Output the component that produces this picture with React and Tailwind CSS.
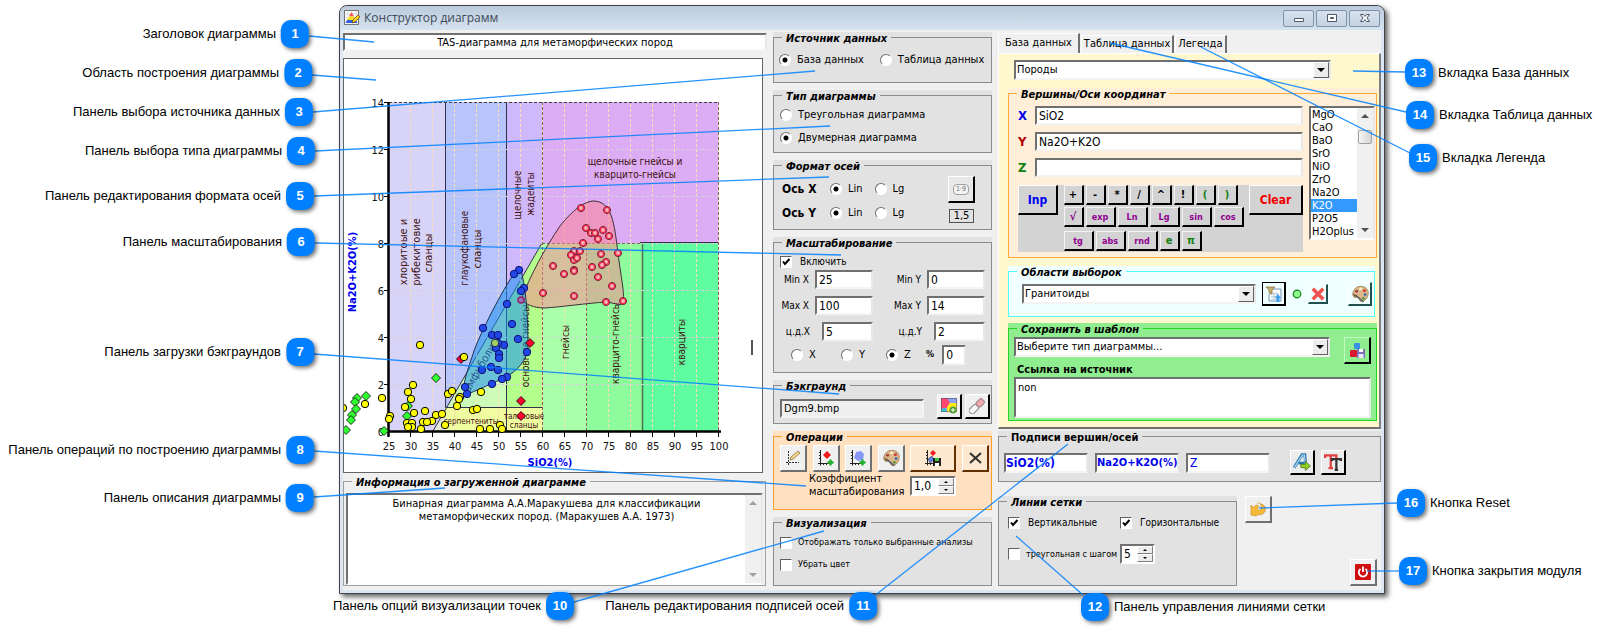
import { useState } from 'react'
import { clsx } from 'clsx'

const callouts = [
  { n: 1, x: 295, y: 34, side: 'left', text: 'Заголовок диаграммы', line: [309, 36, 374, 42] },
  { n: 2, x: 298, y: 73, side: 'left', text: 'Область построения диаграммы', line: [312, 75, 376, 80] },
  { n: 3, x: 299, y: 112, side: 'left', text: 'Панель выбора источника данных', line: [313, 112, 815, 71] },
  { n: 4, x: 301, y: 151, side: 'left', text: 'Панель выбора типа диаграммы', line: [315, 151, 830, 126] },
  { n: 5, x: 300, y: 196, side: 'left', text: 'Панель редактирования формата осей', line: [314, 196, 829, 177] },
  { n: 6, x: 301, y: 242, side: 'left', text: 'Панель масштабирования', line: [315, 243, 841, 255] },
  { n: 7, x: 300, y: 352, side: 'left', text: 'Панель загрузки бэкграундов', line: [314, 354, 839, 394] },
  { n: 8, x: 300, y: 450, side: 'left', text: 'Панель операций по построению диаграммы', line: [314, 451, 806, 486] },
  { n: 9, x: 300, y: 498, side: 'left', text: 'Панель описания диаграммы', line: [314, 497, 445, 488] },
  { n: 10, x: 560, y: 606, side: 'left', text: 'Панель опций визуализации точек', line: [574, 602, 824, 531] },
  { n: 11, x: 863, y: 606, side: 'left', text: 'Панель редактирования подписей осей', line: [873, 597, 1068, 444] },
  { n: 12, x: 1095, y: 607, side: 'right', text: 'Панель управления линиями сетки', line: [1083, 595, 1016, 536] },
  { n: 13, x: 1419, y: 73, side: 'right', text: 'Вкладка База данных', line: [1405, 72, 1353, 71] },
  { n: 14, x: 1420, y: 115, side: 'right', text: 'Вкладка Таблица данных', line: [1406, 112, 1110, 43] },
  { n: 15, x: 1423, y: 158, side: 'right', text: 'Вкладка Легенда', line: [1410, 153, 1201, 47] },
  { n: 16, x: 1411, y: 503, side: 'right', text: 'Кнопка Reset', line: [1397, 503, 1259, 508] },
  { n: 17, x: 1413, y: 571, side: 'right', text: 'Кнопка закрытия модуля', line: [1399, 571, 1367, 571] },
]

const blue = [[519,270],[514,274],[524,288],[521,291],[507,304],[483,328],[512,324],[492,335],[498,335],[518,339],[504,345],[498,343],[496,348],[527,352],[499,354],[499,358],[491,367],[498,370],[482,370],[507,377],[502,379],[492,384],[465,387],[467,394]]
const pink = [[581,208],[607,210],[586,228],[591,233],[595,233],[603,230],[609,236],[598,239],[583,243],[618,253],[574,251],[580,251],[571,255],[574,260],[577,258],[601,254],[606,262],[602,265],[592,267],[574,270],[574,271],[564,274],[598,277],[612,286],[574,296],[543,293],[606,302],[623,301],[553,266]]
const yellow = [[420,345],[464,357],[413,385],[408,392],[411,399],[382,398],[365,404],[343,408],[405,407],[414,413],[425,411],[436,415],[442,414],[448,394],[452,391],[460,397],[459,399],[457,406],[481,392],[473,410],[477,409],[445,425],[390,416],[389,419],[407,423],[412,423],[412,427],[408,427],[421,429],[423,422],[432,421],[427,422],[480,429],[490,429],[500,425],[502,429]]
const green = [[436,378],[357,398],[366,396],[355,402],[356,409],[352,415],[351,420],[346,430],[384,431],[407,416],[408,406]]
const red = [[530,343],[521,401],[521,416],[461,359]]

const xTicks = [25, 30, 35, 40, 45, 50, 55, 60, 65, 70, 75, 80, 85, 90, 95, 100]
const yTicks = [0, 2, 4, 6, 8, 10, 12, 14]
const px = v => 389 + (v - 25) * 4.4
const py = v => 431.5 - v * 23.5

// [text, x, y, angle, size]
const zones = [
  ['хлоритоые и', 407, 252, -90, 11],
  ['рибекитовие', 420, 252, -90, 11],
  ['сланцы', 432, 253, -90, 11],
  ['глаукофановые', 468, 248, -90, 10],
  ['сланцы', 481, 249, -90, 11],
  ['щелочные', 521, 195, -90, 10],
  ['жадеиты', 534, 194, -90, 10],
  ['щелочные гнейсы и', 635, 165, 0, 10],
  ['кварцито-гнейсы', 635, 178, 0, 10],
  ['амфиболиты', 486, 364, -60, 11],
  ['основные гнейсы', 529, 346, -90, 10],
  ['гнейсы', 569, 342, -90, 10],
  ['кварцито-гнейсы', 619, 343, -90, 10],
  ['кварциты', 685, 342, -90, 10],
  ['серпентениты', 471, 424, 0, 8],
  ['тальковые', 524, 419, 0, 8],
  ['сланцы', 524, 428, 0, 8],
]

const oxides = ['MgO', 'CaO', 'BaO', 'SrO', 'NiO', 'ZrO', 'Na2O', 'K2O', 'P2O5', 'H2Oplus']

const field = 'min-w-0 border-2 border-t-[#707070] border-l-[#707070] border-r-[#e8e8e8] border-b-[#f4f4f4] bg-white px-0.5 text-[12px] leading-[14px] text-black outline-none'

const tones = {
  gray: { bg: 'bg-[#e2e2e2]', line: 'border-[#8c8c8c]' },
  plain: { bg: 'bg-[#f0f0f0]', line: 'border-[#a0a0a0]' },
  orange: { bg: 'bg-[#ffe0c0]', line: 'border-[#ff9f2a]' },
  peach: { bg: 'bg-[#ffefd8]', line: 'border-[#ffa93a]' },
  cyan: { bg: 'bg-[#f0ffff]', line: 'border-[#4cffff]' },
  green: { bg: 'bg-[#90ee90]', line: 'border-[#20d820]' },
}

function Group({ title, tone = 'gray', upright, className, children }) {
  const t = tones[tone]
  return (
    <section aria-label={title} className={clsx('flex flex-col pt-[5px]', t.bg, className)}>
      <div className={clsx('flex-1 border', t.line)}>
        <h2 className={clsx('-mt-1.5 ml-2 w-fit whitespace-nowrap px-1 text-[11px] leading-[14px] font-bold', !upright && 'italic', t.bg)}>{title}</h2>
        {children}
      </div>
    </section>
  )
}

function Radio({ name, label, checked, className }) {
  return (
    <label className={clsx('flex items-center whitespace-nowrap leading-4', className)}>
      <input type="radio" name={name} defaultChecked={checked}
        className="h-3 w-3 shrink-0 appearance-none rounded-full border border-t-[#707070] border-l-[#707070] border-r-white border-b-white bg-white checked:bg-[radial-gradient(circle,#000_2px,#fff_3px)]" />
      {label}
    </label>
  )
}

function Check({ label, checked, className }) {
  return (
    <label className={clsx('flex items-center whitespace-nowrap leading-[13px]', className)}>
      <span className="grid shrink-0">
        <input type="checkbox" defaultChecked={checked} className="peer col-start-1 row-start-1 h-3 w-3 appearance-none border border-t-[#606060] border-l-[#606060] border-r-white border-b-white bg-white" />
        <svg viewBox="0 0 12 12" className="pointer-events-none invisible col-start-1 row-start-1 h-3 w-3 peer-checked:visible">
          <path d="M3 5.5 5 8 9.5 3" fill="none" stroke="#000" strokeWidth="2" />
        </svg>
      </span>
      {label}
    </label>
  )
}

function Combo({ label, value, className }) {
  return (
    <div className={clsx('grid h-5', className)}>
      <select aria-label={label} className="col-start-1 row-start-1 w-full appearance-none border-2 border-t-[#707070] border-l-[#707070] border-r-[#e8e8e8] border-b-[#f4f4f4] bg-white pl-px text-[11px] leading-4">
        <option>{value}</option>
      </select>
      <span className="pointer-events-none col-start-1 row-start-1 my-0.5 mr-0.5 grid w-4 place-items-center justify-self-end border border-t-white border-l-white border-r-[#606060] border-b-[#606060] bg-[#ececec]">
        <svg viewBox="0 0 8 4" className="h-1 w-2"><path d="M0 0h8L4 4z" /></svg>
      </span>
    </div>
  )
}

function Spin({ label, value, className }) {
  return (
    <div className={clsx('flex h-5 border-2 border-t-[#707070] border-l-[#707070] border-r-white border-b-white bg-white', className)}>
      <input aria-label={label} defaultValue={value} className="w-0 min-w-0 flex-1 bg-white pl-0.5 text-[12px] outline-none" />
      <div className="flex w-4 flex-col">
        <button aria-label={`${label} больше`} className="grid flex-1 place-items-center border border-t-white border-l-white border-r-[#808080] border-b-[#808080] bg-[#ececec]">
          <svg viewBox="0 0 4 2" className="h-0.5 w-1"><path d="M0 2h4L2 0z" /></svg>
        </button>
        <button aria-label={`${label} меньше`} className="grid flex-1 place-items-center border border-t-white border-l-white border-r-[#808080] border-b-[#808080] bg-[#ececec]">
          <svg viewBox="0 0 4 2" className="h-0.5 w-1"><path d="M0 0h4L2 2z" /></svg>
        </button>
      </div>
    </div>
  )
}

function Tool({ label, className = 'h-[27px] w-[27px] border-r-[#707070] border-b-[#707070] bg-[#f0f0f0]', children }) {
  return (
    <button aria-label={label} className={clsx('grid shrink-0 place-items-center border border-t-white border-l-white border-r-2 border-b-2', className)}>
      {children}
    </button>
  )
}

function Icon({ children, size = 'h-4 w-4' }) {
  return <svg viewBox="0 0 16 16" fill="none" className={size}>{children}</svg>
}

function Plus() {
  return <path d="M12.5 9.5v6M9.5 12.5h6" stroke="#20b030" strokeWidth="2.4" />
}

function Axes() {
  return <path d="M2.5 0v15.5M0 13.5h13M1 2.5h1.5M1 5.5h1.5M1 8.5h1.5M5.5 13v2M8.5 13v2" stroke="#222" />
}

function PaletteIcon() {
  return (
    <Icon size="h-[18px] w-[18px]">
      <path d="M8.5 1.2c4 0 6.8 2.4 6.8 5.8 0 4.6-3 7.5-6.3 7.5-1.7 0-1.3-2.2-2-3.2-.9-1.2-3.2.5-4.7-.9C.4 8.5 2.5 1.2 8.5 1.2z" fill="#dcb98c" stroke="#a08058" strokeWidth=".8" />
      <circle cx="5" cy="5.5" r="1.3" fill="#a04040" /><circle cx="8.5" cy="3.5" r="1.2" fill="#fff4d0" />
      <circle cx="12" cy="5" r="1.3" fill="#d03030" /><circle cx="12.5" cy="8.5" r="1.2" fill="#3068b0" /><circle cx="11" cy="11.8" r="1.2" fill="#509040" />
      <path d="M4 9l7 6" stroke="#606060" strokeWidth="1.5" /><path d="M1.5 7.5 5 9l-1.2 1.8z" fill="#705030" />
    </Icon>
  )
}

function Chart() {
  return (
    <svg viewBox="344 59 418 413" className="block w-full font-['DejaVu_Sans_Condensed','DejaVu_Sans',sans-serif]" role="img" aria-label="TAS-диаграмма">
      <rect x="389" y="102" width="56" height="329" fill="#d8d4f8" />
      <rect x="445" y="102" width="61" height="329" fill="#b8c4fc" />
      <rect x="506" y="102" width="36" height="329" fill="#d0b8fc" />
      <rect x="542" y="102" width="177" height="141" fill="#dcacf4" />
      <path d="M433 431 445 411V431z" fill="#e0e8d8" />
      <path d="M445 411 506 305V431H445z" fill="#ccfcb8" />
      <path d="M506 305 542 243V431H506z" fill="#b4ff8c" />
      <rect x="542" y="243" width="44" height="188" fill="#aaffaa" />
      <rect x="586" y="243" width="57" height="188" fill="#8efb9c" />
      <rect x="643" y="243" width="76" height="188" fill="#60fca0" />
      <path d="M445 407h97v24h-97z" fill="#f0fca0" />

      <g stroke="#303048" fill="none">
        <path d="M445.5 102V407.5H542M506.5 102V431" />
        <path d="M433 431 542 243" />
        <path d="M642.5 243V430" stroke="#507050" strokeWidth="1.5" />
        <path d="M640 242.5H719" />
      </g>
      <g strokeDasharray="3 2" fill="none">
        {xTicks.slice(1).map(v => <path key={v} d={`M${px(v) - 0.5} 104V430`} stroke="#ffdcb8" />)}
        {yTicks.slice(1, 7).map(v => <path key={v} d={`M391 ${py(v)}H718`} stroke="#d4d0dc" />)}
        <path d="M389 102.5H719" stroke="#404040" />
        <path d="M718.5 102V431M586.5 243V431M542.5 102V431M542 243.5H640" stroke="#806858" />
      </g>

      <g fill="#401010" textAnchor="middle">
        {zones.map(([t, x, y, a, s], i) => <text key={i} x={x} y={y} fontSize={s} transform={`rotate(${a} ${x} ${y})`}>{t}</text>)}
      </g>

      <path d="M521 300C530 276 545 248 560 226 572 211 584 201 594 201 612 202 614 222 618 253 621 278 625 295 623 301 622 308 617 303 606 302 590 303 560 307 545 308 533 308 526 304 521 300Z" fill="#ff8090" fillOpacity=".5" stroke="#403038" />
      <path d="M467 394C460 390 467 372 473 354 478 338 498 298 513 275 516 269 520 266 522 274 527 296 528 322 528 350 524 366 512 374 502 379 488 385 474 392 467 394Z" fill="#1890f0" fillOpacity=".55" stroke="#203050" />

      <path d="M388.5 102V437M387 431.5H721" stroke="#000" strokeWidth="2.5" />
      <g stroke="#000">
        {xTicks.map(v => <path key={v} d={`M${px(v) - 0.5} 432v5`} />)}
        {yTicks.map(v => <path key={v} d={`M384 ${py(v)}h5`} />)}
      </g>
      <g fontSize="11" fill="#111">
        {xTicks.map(v => <text key={v} x={px(v)} y="450" textAnchor="middle">{v}</text>)}
        {yTicks.map(v => <text key={v} x="384" y={py(v) + 4} textAnchor="end">{v}</text>)}
      </g>
      <g fontSize="11" fontWeight="bold" fill="#0000f0" textAnchor="middle">
        <text x="550" y="466">SiO2(%)</text>
        <text x="356" y="272" transform="rotate(-90 356 272)">Na2O+K2O(%)</text>
      </g>

      <g fill="#30ff30" stroke="#000" strokeWidth=".8">
        {green.map(([x, y], i) => <path key={i} d={`M${x} ${y - 4.5}l4.5 4.5-4.5 4.5-4.5-4.5z`} />)}
      </g>
      <g fill="#ff0030" stroke="#000" strokeWidth=".8">
        {red.map(([x, y], i) => <path key={i} d={`M${x} ${y - 4.5}l4.5 4.5-4.5 4.5-4.5-4.5z`} />)}
      </g>
      <g fill="#2048e8" stroke="#101070">
        {blue.map(([x, y], i) => <circle key={i} cx={x} cy={y} r="3.7" />)}
      </g>
      <circle cx="495" cy="343" r="3.7" fill="#a0d060" stroke="#203050" />
      <circle cx="521" cy="300" r="3" fill="#9878c0" stroke="#902060" strokeWidth="1.5" />
      <g fill="#f8b8b4">
        {pink.map(([x, y], i) => (
          <g key={i}>
            <circle cx={x} cy={y} r="3.5" stroke="#501020" />
            <circle cx={x} cy={y} r="2.6" stroke="#f02850" strokeWidth="1.4" />
          </g>
        ))}
      </g>
      <g fill="#ffff00" stroke="#000">
        {yellow.map(([x, y], i) => <circle key={i} cx={x} cy={y} r="3.7" />)}
      </g>
      <path d="M752 340v15" stroke="#555" strokeWidth="2" />
    </svg>
  )
}

function LeftColumn() {
  return (
    <div className="flex min-w-0 flex-col">
      <input aria-label="Заголовок диаграммы" defaultValue="TAS-диаграмма для метаморфических пород"
        className="mt-px h-[18px] border-2 border-t-[#707070] border-l-[#707070] border-r-[#e8e8e8] border-b-[#f4f4f4] bg-white text-center text-[11px] outline-none" />
      <div className="mt-[7px] mr-1 overflow-hidden border border-[#646464] bg-white">
        <Chart />
      </div>
      <Group title="Информация о загруженной диаграмме" tone="plain" className="mt-[3px] mr-px flex-1">
        <div className="mx-0.5 mt-[3px] flex h-[92px] border-2 border-t-[#707070] border-l-[#707070] border-r-[#e8e8e8] border-b-white bg-white">
          <textarea aria-label="Описание диаграммы" className="min-w-0 flex-1 resize-none overflow-hidden px-8 pt-0.5 text-center text-[11px] leading-[13px] outline-none"
            defaultValue="Бинарная диаграмма А.А.Маракушева для классификации метаморфических пород. (Маракушев А.А. 1973)" />
          <div className="flex w-4 flex-col items-center justify-between bg-[#f0f0f0] py-1.5">
            <svg viewBox="0 0 8 4" className="h-1 w-2"><path d="M0 4h8L4 0z" fill="#a0a0a0" /></svg>
            <svg viewBox="0 0 8 4" className="h-1 w-2"><path d="M0 0h8L4 4z" fill="#a0a0a0" /></svg>
          </div>
        </div>
      </Group>
    </div>
  )
}

function Scale({ label, value, narrow }) {
  return (
    <label className="flex items-center justify-end whitespace-nowrap text-[10px]">
      {label}
      <input defaultValue={value} className={clsx(field, 'h-[19px]', narrow ? 'ml-3 w-[51px]' : 'ml-1.5 w-[58px]')} />
    </label>
  )
}

function MiddleColumn() {
  return (
    <div className="flex min-w-0 flex-col gap-[7px]">
      <Group title="Источник данных" className="min-h-[51px]">
        <div className="mt-1.5 flex pl-[5px] text-[11px]">
          <Radio name="source" label="База данных" checked className="gap-1.5" />
          <Radio name="source" label="Таблица данных" className="ml-4 gap-1.5" />
        </div>
      </Group>

      <Group title="Тип диаграммы" className="min-h-[63px]">
        <div className="mt-[3px] flex flex-col gap-[7px] pl-1.5 text-[11px]">
          <Radio name="kind" label="Треугольная диаграмма" className="gap-1.5" />
          <Radio name="kind" label="Двумерная диаграмма" checked className="gap-1.5" />
        </div>
      </Group>

      <Group title="Формат осей" className="min-h-[70px]">
        <div className="flex justify-between pr-4 pl-2">
          <div className="mt-[7px] flex flex-col gap-2 text-[11px]">
            {['X', 'Y'].map(a => (
              <div key={a} className="flex items-center gap-3">
                <span className="w-9 whitespace-nowrap text-[12px] leading-4 font-bold">Ось {a}</span>
                <Radio name={`axis-${a}`} label="Lin" checked className="gap-1.5" />
                <Radio name={`axis-${a}`} label="Lg" className="gap-1.5" />
              </div>
            ))}
          </div>
          <div className="flex flex-col items-center gap-1.5 pt-0.5">
            <Tool label="Диапазон осей" className="h-[27px] w-[27px] border-r-black border-b-black bg-[#e8e8e8]">
              <span className="rounded-sm border border-[#a0a0a0] bg-[#f4f4f4] px-0.5 text-[7px] leading-[9px] text-[#707070]">1·9</span>
            </Tool>
            <button className="w-[25px] border border-[#505050] text-[11px] leading-3">1,5</button>
          </div>
        </div>
      </Group>

      <Group title="Масштабирование" className="min-h-[136px]">
        <Check label="Включить" checked className="mt-1 gap-2 pl-1.5 text-[10px]" />
        <div className="mt-0.5 grid grid-cols-[95px_1fr] gap-y-[7px] pr-1.5 pl-1">
          <Scale label="Min X" value="25" />
          <Scale label="Min Y" value="0" />
          <Scale label="Max X" value="100" />
          <Scale label="Max Y" value="14" />
          <Scale label="ц.д.X" value="5" narrow />
          <Scale label="ц.д.Y" value="2" narrow />
        </div>
        <div className="mt-1 flex items-center pl-[17px] text-[11px]">
          <Radio name="axis" label="X" className="w-[50px] gap-1.5" />
          <Radio name="axis" label="Y" className="w-[45px] gap-1.5" />
          <Radio name="axis" label="Z" checked className="w-10 gap-1.5" />
          <label className="flex items-center gap-2 text-[9px] font-bold">
            %
            <input defaultValue="0" className={clsx(field, 'h-5 w-6 font-normal')} />
          </label>
        </div>
      </Group>

      <Group title="Бэкграунд" className="min-h-[44px]">
        <div className="flex items-center gap-[3px] pr-px pl-1.5">
          <input aria-label="Файл бэкграунда" defaultValue="Dgm9.bmp" className="mt-1 mr-2.5 h-[19px] w-0 flex-1 border-2 border-t-[#707070] border-l-[#707070] border-r-[#f4f4f4] border-b-[#f4f4f4] bg-[#efefef] px-0.5 text-[11px] outline-none" />
          <Tool label="Загрузить бэкграунд" className="h-[25px] w-[25px] border-r-black border-b-black bg-[#f0f0f0]">
            <Icon>
              <path d="M0 0h16v14H0z" fill="#90a0f0" /><path d="M0 0h6l3 5-3 5-6 1z" fill="#ff4870" /><path d="M9 5h7v9H6V9z" fill="#ffe818" />
              <path d="M0 11l5-1v4H0z" fill="#30c8d8" /><path d="M.5.5h15v13H.5z" stroke="#505060" strokeWidth=".6" />
              <circle cx="12" cy="12" r="3.5" fill="#50a030" /><path d="M12 10v4M10 12h4" stroke="#fff" />
            </Icon>
          </Tool>
          <Tool label="Очистить бэкграунд" className="h-[25px] w-[25px] border-r-black border-b-black bg-[#f0f0f0]">
            <Icon>
              <rect x="-1.5" y="5" width="10" height="6" rx="2" fill="#f8f8f8" stroke="#888" transform="rotate(-45 8 8)" />
              <rect x="8.5" y="5" width="8" height="6" rx="2" fill="#f0a8b0" stroke="#a08080" transform="rotate(-45 8 8)" />
            </Icon>
          </Tool>
        </div>
      </Group>

      <Group title="Операции" tone="orange" className="min-h-[79px]">
        <div className="flex justify-between pr-0.5 pl-1.5">
          <Tool label="Построить оси">
            <Icon><path d="M3.5 1v14M1 12.5h13" stroke="#333" strokeDasharray="2 1" /><path d="M5 10l1-3 7-6 2 2-7 6z" fill="#f0d890" stroke="#806020" strokeWidth=".7" /></Icon>
          </Tool>
          <Tool label="Добавить точки">
            <Icon><Axes /><path d="M9 1l4 4-4 4-4-4z" fill="#f01818" /><Plus /></Icon>
          </Tool>
          <Tool label="Добавить область">
            <Icon><Axes /><path d="M6 2l5-1 3 3-1 6-5 1-4-3z" fill="#8898f8" /><Plus /></Icon>
          </Tool>
          <Tool label="Цвета"><PaletteIcon /></Tool>
          <Tool label="Сохранить диаграмму" className="h-[27px] w-[46px] border-r-[#603000] border-b-[#603000] bg-[#ffe8d0]">
            <Icon><Axes /><path d="M8 0l3 3-3 3-3-3z" fill="#f01818" /><path d="M3 9l4-3 2 4-4 3z" fill="#6080f0" stroke="#222" strokeWidth=".5" /><path d="M8 8h8v8H8z" fill="#222" /><path d="M10 8h4v3h-4z" fill="#40c040" /><path d="M10 13h4v3h-4z" fill="#fff" /></Icon>
          </Tool>
          <Tool label="Удалить" className="h-[27px] w-[27px] border-r-[#603000] border-b-[#603000] bg-[#ffe8d0]">
            <Icon><path d="M3 3l11 10M14 3 3 13" stroke="#303030" strokeWidth="2" /></Icon>
          </Tool>
        </div>
        <div className="flex items-start pl-[35px]">
          <p className="w-[101px] text-[11px] leading-[13px]">Коэффициент масштабирования</p>
          <Spin label="Коэффициент масштабирования" value="1,0" className="mt-1 w-[46px]" />
        </div>
      </Group>

      <Group title="Визуализация" className="min-h-[69px]">
        <div className="mt-[5px] flex flex-col gap-[9px] pl-1.5 text-[9px]">
          <Check label="Отображать только выбранные анализы" className="gap-1.5" />
          <Check label="Убрать цвет" className="gap-1.5" />
        </div>
      </Group>
    </div>
  )
}

const keyRows = [
  ['+', '-', '*', '/', '^', '!', '(', ')'],
  ['√', 'exp', 'Ln', 'Lg', 'sin', 'cos'],
  ['tg', 'abs', 'rnd', 'e', 'π'],
]

function Key({ k }) {
  const long = k.length > 1
  const color = '()eπ'.includes(k) ? 'text-[#108010]' : long || k === '√' ? 'text-[#900090]' : 'text-black'
  return (
    <button className={clsx('h-5 border border-t-[#f4f4f4] border-l-[#f4f4f4] border-r-2 border-b-2 border-r-black border-b-black bg-[#d3d3d3] font-bold', long ? 'w-[30px] text-[9px]' : 'w-5 text-[11px]', 'leading-3', color)}>{k}</button>
  )
}

function RightColumn() {
  const [tab, setTab] = useState(0)
  const [oxide, setOxide] = useState('K2O')
  return (
    <div className="flex min-w-0 flex-col">
      <div role="tablist" className="mt-px flex items-end text-[11px]">
        {['База данных', 'Таблица данных', 'Легенда'].map((t, i) => (
          <button key={t} role="tab" aria-selected={tab === i} onClick={() => setTab(i)}
            className={clsx('mr-px border-t border-l border-r-2 border-t-white border-l-white border-r-[#707070] whitespace-nowrap', tab === i ? 'h-5 px-1.5' : 'h-[18px] px-0.5')}>{t}</button>
        ))}
      </div>
      <div className="flex flex-col gap-2 border border-r-2 border-b-2 border-t-white border-l-white border-r-[#808080] border-b-[#707070] bg-[#fff8cf] pt-1.5 pr-0.5 pb-1.5 pl-[9px]">
        <Combo label="Таблица" value="Породы" className="mr-[46px] ml-1.5" />

        <Group title="Вершины/Оси координат" tone="peach">
          <div className="flex gap-1.5 pt-1 pb-[5px] pl-[9px]">
            <div className="min-w-0 flex-1">
              <div className="flex flex-col gap-[7px]">
                {[['X', 'SiO2', 'text-[#0000f0]'], ['Y', 'Na2O+K2O', 'text-[#b00000]'], ['Z', '', 'text-[#108010]']].map(([a, v, c]) => (
                  <label key={a} className={clsx('flex items-center text-[13px] leading-4 font-bold', c)}>
                    <span className="w-[17px]">{a}</span>
                    <input defaultValue={v} className={clsx(field, 'h-[19px] flex-1 font-normal')} />
                  </label>
                ))}
              </div>
              <div className="mt-2 flex min-h-[67px] items-start justify-between bg-[#d3d3d3]">
                <button className="h-[30px] w-10 border border-t-white border-l-white border-r-2 border-b-2 border-r-black border-b-black bg-[#d3d3d3] text-[12px] font-bold text-[#0000f0]">Inp</button>
                <div className="flex flex-col gap-0.5">
                  {keyRows.map((row, i) => (
                    <div key={i} className={clsx('flex gap-0.5', i === 2 && 'pt-0.5')}>{row.map(k => <Key key={k} k={k} />)}</div>
                  ))}
                </div>
                <button className="h-[30px] w-[54px] border border-t-white border-l-white border-r-2 border-b-2 border-r-black border-b-black bg-[#d3d3d3] text-[12px] font-bold text-[#f00000]">Clear</button>
              </div>
            </div>
            <div className="mr-px flex h-[134px] w-[66px] border-2 border-t-[#707070] border-l-[#707070] border-r-[#e8e8e8] border-b-white bg-white">
              <ul role="listbox" aria-label="Оксиды" className="min-w-0 flex-1 overflow-hidden text-[11px] leading-[13px]">
                {oxides.map(o => (
                  <li key={o} role="option" aria-selected={o === oxide} onClick={() => setOxide(o)}
                    className={clsx('pl-px', o === oxide && 'bg-[#3399ff] text-white')}>{o}</li>
                ))}
              </ul>
              <div className="flex w-4 flex-col items-center bg-[#f0f0f0] py-1.5">
                <svg viewBox="0 0 8 4" className="h-1 w-2"><path d="M0 4h8L4 0z" fill="#505050" /></svg>
                <span className="mt-3 h-3.5 w-3.5 rounded-xs border border-[#a0a0a0] bg-linear-to-r from-[#f6f6f6] to-[#d4d4d4]" />
                <svg viewBox="0 0 8 4" className="mt-auto h-1 w-2"><path d="M0 0h8L4 4z" fill="#505050" /></svg>
              </div>
            </div>
          </div>
        </Group>

        <Group title="Области выборок" tone="cyan" className="mr-0.5 min-h-[51px]">
          <div className="flex items-center pt-0.5 pr-0.5 pl-[13px]">
            <Combo label="Область" value="Гранитоиды" className="w-0 flex-1" />
            <Tool label="Фильтр" className="ml-1.5 h-6 w-6 border-t-black! border-l-black! border-r-black border-b-black bg-[#f0ffff]">
              <Icon><path d="M5 3h10v12H3V8" fill="#fff" stroke="#7090b0" /><path d="M5 8h8M5 10.5h8M5 13h8M8 6v8M11 6v8" stroke="#a8c0d8" strokeWidth=".8" /><path d="M0 1h9L6 4v4l-3-1V4z" fill="#c8b070" stroke="#806830" strokeWidth=".7" /><path d="M9 12l3-4 3 4h-1.5v4h-3v-4z" fill="#38a0f0" /></Icon>
            </Tool>
            <svg viewBox="0 0 10 10" className="mx-1.5 h-2.5 w-2.5"><circle cx="5" cy="5" r="3.8" fill="#90ff90" stroke="#108010" strokeWidth="1.2" /></svg>
            <Tool label="Удалить область" className="h-5 w-5 border-r-[#205050] border-b-[#205050] bg-[#f0ffff]">
              <Icon size="h-3.5 w-3.5"><path d="M2 2l12 12M14 2 2 14" stroke="#f05050" strokeWidth="4" /></Icon>
            </Tool>
            <Tool label="Цвет области" className="ml-5 h-6 w-6 border-r-[#205050] border-b-[#205050] bg-[#f0ffff]"><PaletteIcon /></Tool>
          </div>
        </Group>

        <Group title="Сохранить в шаблон" tone="green" className="-mt-0.5">
          <div className="px-[5px] pb-0.5">
            <div className="flex items-start justify-between">
              <Combo label="Тип диаграммы" value="Выберите тип диаграммы..." className="mr-3.5 flex-1" />
              <Tool label="Сохранить шаблон" className="h-[27px] w-[27px] border-t-[#c0ffc0]! border-l-[#c0ffc0]! border-r-black border-b-black bg-[#90ee90]">
                <Icon><rect x="5" y="1" width="6" height="6" rx="1" fill="#3890e0" /><rect x="1" y="8" width="7" height="7" rx="1" fill="#d81830" /><path d="M8 7h8v9H8z" fill="#8070b8" /><path d="M10 7h4v3h-4z" fill="#fff" /><path d="M9.5 12h5v4h-5z" fill="#e8e8f8" /></Icon>
              </Tool>
            </div>
            <label htmlFor="source-link" className="block pl-[3px] text-[11px] leading-[11px] font-bold">Ссылка на источник</label>
            <textarea id="source-link" defaultValue="non" className={clsx(field, 'mt-0.5 block h-[41px] w-full resize-none pt-0.5 text-[11px]!')} />
          </div>
        </Group>
      </div>

      <Group title="Подписи вершин/осей" upright className="mt-0.5">
        <div className="flex items-center pt-[5px] pb-1.5 pl-[5px] text-[12px]">
          <input aria-label="Подпись X" defaultValue="SiO2(%)" className={clsx(field, 'h-5 w-[84px] px-0! font-bold text-[#0000f0]!')} />
          <input aria-label="Подпись Y" defaultValue="Na2O+K2O(%)" className={clsx(field, 'ml-[7px] h-5 w-[84px] px-0! text-[11px]! font-bold text-[#0000f0]!')} />
          <input aria-label="Подпись Z" defaultValue="Z" className={clsx(field, 'ml-[7px] h-5 w-[84px] text-[#0000f0]!')} />
          <Tool label="Применить подписи" className="ml-5 h-[25px] w-[25px] border-r-black border-b-black bg-[#ececec]">
            <Icon size="h-[18px] w-[18px]"><path d="M1 13 8 1.5h2.5l1 11.5M5 9h6" stroke="#2878b0" strokeWidth="2.6" /><path d="M1.2 13 8.2 1.8h2l1 11" stroke="#b0dcf8" /><path d="M7 10h4V7.5l4.5 4-4.5 4V13H7z" fill="#90d020" stroke="#507818" strokeWidth=".7" /></Icon>
          </Tool>
          <Tool label="Шрифт" className="ml-1.5 h-[25px] w-[25px] border-r-black border-b-black bg-[#ececec]">
            <Icon size="h-[18px] w-[18px]"><path d="M1 4.5V2h10v2.5M6 2v11M4 13.5h4" stroke="#e04040" strokeWidth="2" /><path d="M7 7V5.5h8V7M11 5.5V15M9.5 15h3" stroke="#333" strokeWidth="2" /></Icon>
          </Tool>
        </div>
      </Group>

      <div className="mt-3.5 flex flex-1">
        <Group title="Линии сетки" className="w-[239px]">
          <div className="flex pt-1.5 pl-[9px] text-[10px]">
            <Check label="Вертикальные" checked className="w-28 gap-2" />
            <Check label="Горизонтальные" checked className="gap-2" />
          </div>
          <div className="mt-[15px] flex items-center pb-5 pl-[9px] text-[9px]">
            <Check label="треугольная с шагом" className="w-28 gap-1.5" />
            <Spin label="Шаг сетки" value="5" className="w-[35px]" />
          </div>
        </Group>
        <div className="ml-2 flex flex-1 items-start justify-between pr-1">
          <Tool label="Сброс">
            <Icon><path d="M1 4l2.5 2.5c2-3 5-3 5-1 0 1.5-1.5 2-1 3 1 1.5 4 .5 4-2 0-1.5-.5-2.500-1.5-3.500 3 0 5.5 2 5.5 5 0 4-4 6.5-7.5 5.5L6.5 15 1 14z" fill="#f8b838" stroke="#c89030" strokeWidth=".7" /><path d="M7 3c1.5-2 4-1.5 4 .5" stroke="#d8a850" /></Icon>
          </Tool>
          <Tool label="Закрыть" className="h-[27px] w-[27px] self-end border-r-[#707070] border-b-[#707070] bg-[#f0f0f0]">
            <Icon><rect width="16" height="16" rx="1" fill="#d01010" /><path d="M5.5 5a4.2 4.2 0 1 0 5 0M8 2.5V8" stroke="#fff" strokeWidth="1.8" /></Icon>
          </Tool>
        </div>
      </div>
    </div>
  )
}

function WindowButton({ label, children }) {
  return (
    <button aria-label={label} className="grid h-[17px] w-[31px] place-items-center rounded-xs border border-[#8090a8] bg-linear-to-b from-[#d8e2ee] to-[#c4d2e2]">
      <svg viewBox="0 0 12 10" className="h-2.5 w-3" fill="#fff" stroke="#50586a">{children}</svg>
    </button>
  )
}

function Callout({ n, x, y, side, text }) {
  return (
    <div className={clsx('absolute flex -translate-y-1/2 items-center gap-[5px]', side === 'left' && '-translate-x-full flex-row-reverse')}
      style={{ left: side === 'left' ? x + 14 : x - 14, top: y }}>
      <span className="grid h-7 w-7 shrink-0 place-items-center rounded-[10px] bg-[#0080ff] text-[13px] font-bold text-white shadow-[2px_2px_4px_rgba(0,0,0,0.55)]">{n}</span>
      <span className="whitespace-nowrap text-[13px] leading-4">{text}</span>
    </div>
  )
}

export default function App() {
  return (
    <main className="relative min-h-screen overflow-hidden bg-white pt-[5px] font-['Liberation_Sans',Arial,sans-serif] text-black">
      <div className="mr-[220px] ml-[339px] rounded-t-lg border border-[#404048] bg-[#dce7f3] font-['DejaVu_Sans_Condensed','DejaVu_Sans',sans-serif] shadow-[3px_3px_5px_rgba(0,0,0,0.6)]">
        <header className="flex h-6 items-center rounded-t-lg bg-linear-to-b from-[#bccbdc] to-[#d6e3f0] pr-1 pl-1">
          <svg viewBox="0 0 16 16" className="h-4 w-4">
            <path d="M.5.5h14v14H.5z" fill="#fff" stroke="#707070" /><path d="M.5 4h14M.5 8h14M4 .5v14M8 .5v14M12 .5v14" stroke="#c8c8c8" strokeWidth=".6" />
            <path d="M7.5 2 10 6.5H5z" fill="#f05050" /><path d="M5 6.5h5l2 3.5H3z" fill="#f8e020" /><path d="M3 10h9l1.5 3H1.5z" fill="#3060e0" /><path d="M8 13l1-3 5-5 2 2-5 5z" fill="#f8d020" stroke="#604010" strokeWidth=".7" />
          </svg>
          <h1 className="ml-1 flex-1 font-['Open_Sans',sans-serif] text-[12px] leading-4 text-[#404a58]">Конструктор диаграмм</h1>
          <div className="flex gap-0.5">
            <WindowButton label="Свернуть"><path d="M1.5 5.5h9v3h-9z" /></WindowButton>
            <WindowButton label="Развернуть"><path d="M1.5 1.5h9v7h-9zM4.5 4.5h3v1h-3z" /></WindowButton>
            <WindowButton label="Закрыть окно"><path d="M1.5 1.5h3L6 3.5l1.5-2h3L8 5l2.5 3.5h-3L6 6.5l-1.5 2h-3L4 5z" /></WindowButton>
          </div>
        </header>
        <div className="mx-[3px] mb-[3px] grid grid-cols-[424fr_219fr_383fr] gap-1.5 bg-[#f0f0f0] pt-0.5 pb-1">
          <LeftColumn />
          <MiddleColumn />
          <RightColumn />
        </div>
      </div>

      <svg className="pointer-events-none absolute top-0 left-0 h-[632px] w-[1605px]" stroke="#0080ff" strokeOpacity=".85" strokeWidth="1.3">
        {callouts.map(({ n, line: [x1, y1, x2, y2] }) => <line key={n} x1={x1} y1={y1} x2={x2} y2={y2} />)}
      </svg>
      {callouts.map(c => <Callout key={c.n} {...c} />)}
    </main>
  )
}
